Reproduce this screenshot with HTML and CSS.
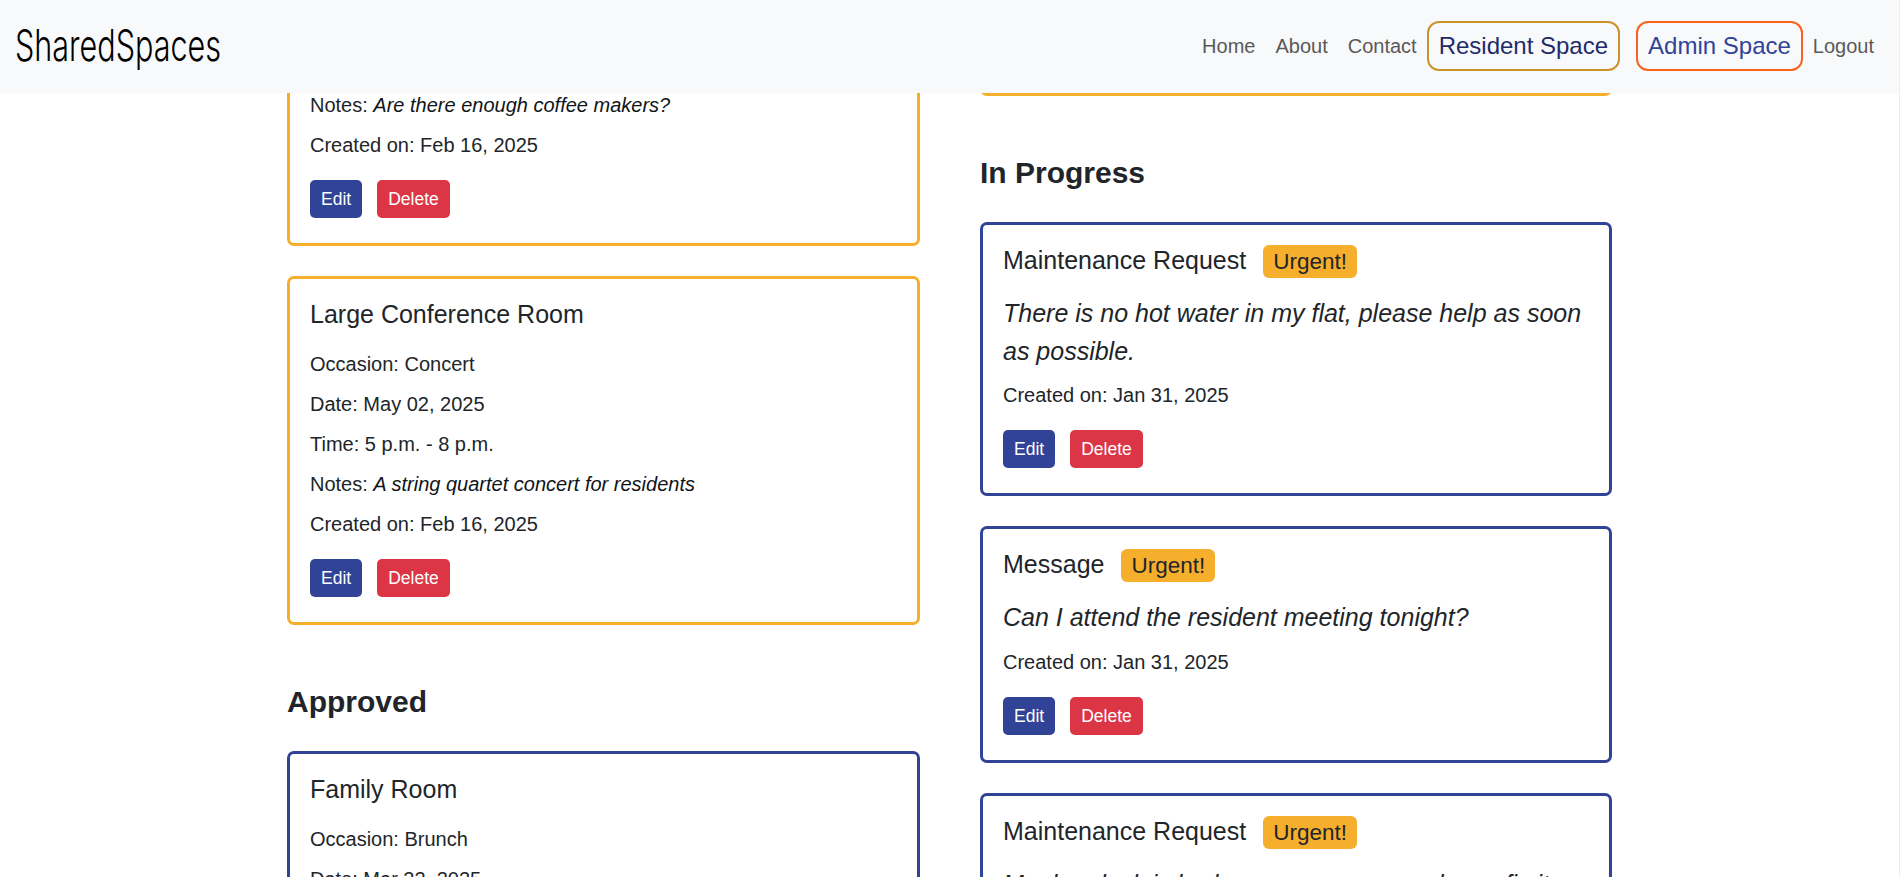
FILE: index.html
```html
<!DOCTYPE html>
<html lang="en">
<head>
<meta charset="utf-8">
<title>SharedSpaces</title>
<link rel="stylesheet" href="styles.css">
</head>
<body>
<header class="navbar">
  <a class="brand" aria-label="SharedSpaces">
    <svg width="210" height="64" viewBox="0 0 210 64"><text x="0" y="47" textLength="206" lengthAdjust="spacingAndGlyphs">SharedSpaces</text></svg>
  </a>
  <nav class="links">
    <a class="link">Home</a>
    <a class="link">About</a>
    <a class="link">Contact</a>
    <a class="space resident">Resident Space</a>
    <a class="space admin">Admin Space</a>
    <a class="link">Logout</a>
  </nav>
</header>
<main class="board">
  <section class="column bookings">
    <article class="card pending">
      <p>Notes: <em>Are there enough coffee makers?</em></p>
      <p>Created on: Feb 16, 2025</p>
      <div class="actions"><button class="btn edit">Edit</button><button class="btn delete">Delete</button></div>
    </article>
    <article class="card pending">
      <h3 class="title">Large Conference Room</h3>
      <p>Occasion: Concert</p>
      <p>Date: May 02, 2025</p>
      <p>Time: 5 p.m. - 8 p.m.</p>
      <p>Notes: <em>A string quartet concert for residents</em></p>
      <p>Created on: Feb 16, 2025</p>
      <div class="actions"><button class="btn edit">Edit</button><button class="btn delete">Delete</button></div>
    </article>
    <h2 class="heading">Approved</h2>
    <article class="card active">
      <h3 class="title">Family Room</h3>
      <p>Occasion: Brunch</p>
      <p>Date: Mar 22, 2025</p>
    </article>
  </section>
  <section class="column requests">
    <article class="card pending"></article>
    <h2 class="heading">In Progress</h2>
    <article class="card active">
      <h3 class="title">Maintenance Request <span class="badge">Urgent!</span></h3>
      <p class="message">There is no hot water in my flat, please help as soon as possible.</p>
      <p>Created on: Jan 31, 2025</p>
      <div class="actions"><button class="btn edit">Edit</button><button class="btn delete">Delete</button></div>
    </article>
    <article class="card active">
      <h3 class="title">Message <span class="badge">Urgent!</span></h3>
      <p class="message">Can I attend the resident meeting tonight?</p>
      <p>Created on: Jan 31, 2025</p>
      <div class="actions"><button class="btn edit">Edit</button><button class="btn delete">Delete</button></div>
    </article>
    <article class="card active">
      <h3 class="title">Maintenance Request <span class="badge">Urgent!</span></h3>
      <p class="message">My door lock is broken, can someone please fix it</p>
    </article>
  </section>
</main>
</body>
</html>
```

FILE: styles.css
```css
* { box-sizing: border-box; }
body {
  margin: 0;
  height: 877px;
  overflow: hidden;
  border-right: 1px solid #ededed;
  background: #fff;
  color: #212529;
  font: 20px/30px "Liberation Sans", Arial, sans-serif;
}
.navbar {
  position: relative;
  z-index: 1;
  display: flex;
  align-items: center;
  justify-content: space-between;
  height: 93px;
  padding: 0 25px 1px 15px;
  background: #f8f9fb;
}
.brand { display: flex; }
.brand text { font: 300 44px Inter, sans-serif; fill: #000; }
.links { display: flex; align-items: center; }
.link { margin-right: 20px; color: #595959; }
.link:nth-child(3) { margin-right: 10px; }
.link:last-child { margin-right: 0; }
.space {
  height: 50px;
  padding: 0 10px;
  border: 2px solid;
  border-radius: 12px;
  font-size: 24px;
  line-height: 46px;
  white-space: nowrap;
}
.resident { margin-right: 16px; border-color: #cc922b; color: #222b69; }
.admin { margin-right: 10px; border-color: #f9621c; color: #304396; }
.board {
  display: grid;
  grid-template-columns: 633px 632px;
  column-gap: 60px;
  align-items: start;
  padding-left: 287px;
}
.bookings { margin-top: -26px; }
.requests { margin-top: -43px; }
.card {
  margin-bottom: 30px;
  padding: 20px;
  border: 3px solid;
  border-radius: 7px;
}
.pending { border-color: #f6ae2d; }
.active { border-color: #304396; }
.heading {
  margin: 59px 0 31px;
  font-size: 30px;
  line-height: 36px;
}
.title {
  height: 30px;
  margin: 0 0 20px;
  font-size: 25px;
  font-weight: 400;
  line-height: 30px;
}
.badge {
  display: inline-block;
  margin-left: 10px;
  padding: 5px 10px;
  border-radius: 6px;
  background: #f6ae2d;
  font-size: 22.5px;
  line-height: 23px;
}
.card p { margin: 0 0 10px; }
.card em { color: #111417; }
.card .message { font-size: 25px; font-style: italic; line-height: 37.5px; }
.actions { display: flex; gap: 15px; margin: 20px 0 5px; }
.btn {
  height: 38px;
  padding: 0 11px;
  border: 0;
  border-radius: 5px;
  color: #fff;
  font: 17.5px/38px "Liberation Sans", Arial, sans-serif;
}
.edit { background: #304396; }
.delete { background: #dc3545; }
```
